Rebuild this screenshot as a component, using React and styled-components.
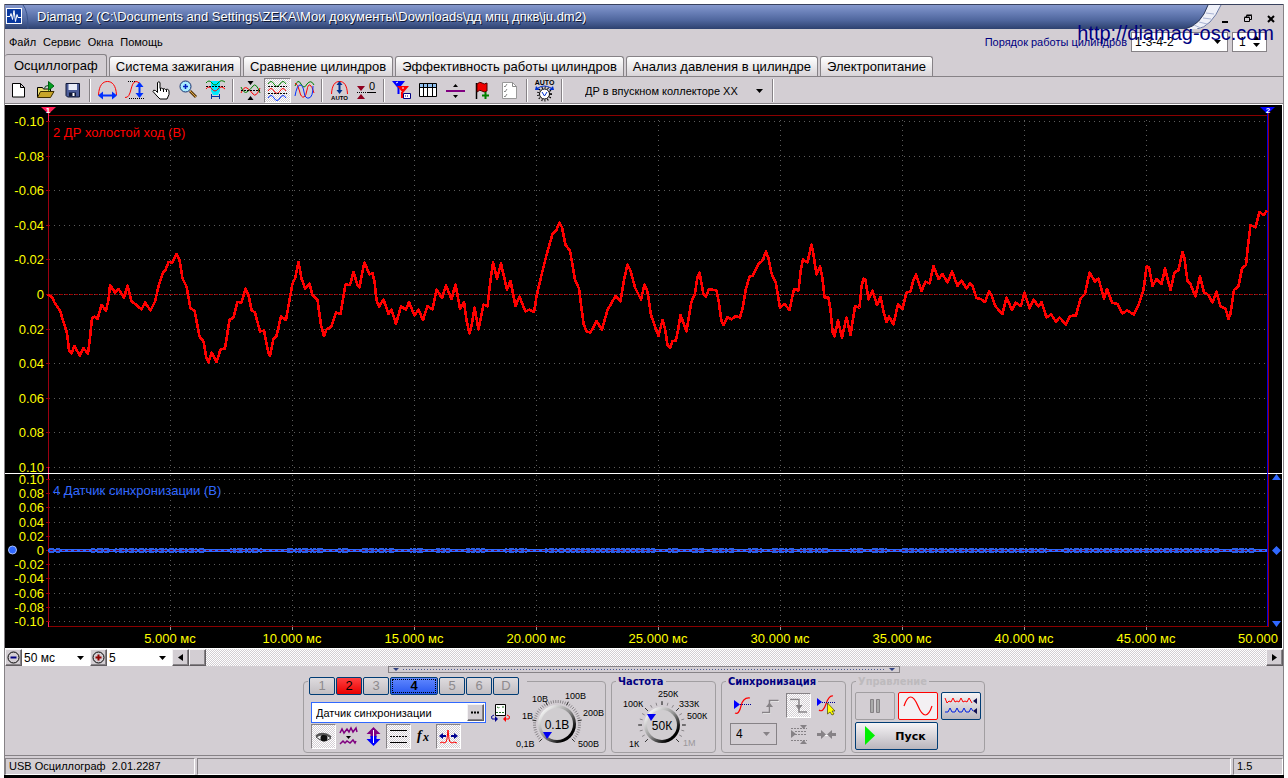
import React from 'react';
import styled, { createGlobalStyle, css } from 'styled-components';

const face = '#d3ced3';
const shadow = '#868286';
const navy = '#000080';
const trace4 = '#3068ff';

const GlobalStyle = createGlobalStyle`
    *, *::before, *::after {
        box-sizing: border-box;
    }
    body {
        margin: 0;
        background: #fff;
        color: #000;
        font-family: "Liberation Sans", Arial, sans-serif;
        font-size: 11px;
    }
    button, input, select {
        font: inherit;
        color: inherit;
        margin: 0;
        padding: 0;
    }
    svg {
        display: block;
        flex: none;
    }
`;

const checkered = css`
    background: repeating-conic-gradient(#fff 0 25%, ${face} 0 50%) 0 0 / 2px 2px;
`;

const Page = styled.div`
    min-height: 100vh;
    padding: 4px 4px 0;
    display: flex;
    flex-direction: column;
`;
const Window = styled.main`
    position: relative;
    display: flex;
    flex-direction: column;
    background: ${face};
    border-left: 1px solid ${shadow};
    border-right: 1px solid ${shadow};
`;
const Desktop = styled.div`
    flex: 1;
    min-height: 4px;
    background: #000;
`;

/* Title bar */

const TitleBar = styled.header`
    display: flex;
    height: 25px;
    border-top: 1px solid #39425e;
`;
const Caption = styled.div`
    flex: 1;
    min-width: 0;
    display: flex;
    align-items: center;
    background: linear-gradient(#8699cd, #6a80b8 30%, #4e659c 65%, #2d416f);
`;
const CaptionText = styled.h1`
    margin: 0 0 0 8px;
    font-size: 13px;
    font-weight: normal;
    line-height: 24px;
    white-space: nowrap;
    overflow: hidden;
    color: #fff;
    text-shadow: 1px 1px 0 #101830;
`;
const CaptionEdge = styled.svg`
    margin-right: -8px;
`;
const WindowButtons = styled.div`
    display: flex;
    align-items: center;
    padding-top: 2px;
`;
const WindowButton = styled.button`
    width: 23px;
    height: 20px;
    display: grid;
    place-items: center;
    border: 0;
    background: none;
`;
const SiteLink = styled.a`
    position: absolute;
    right: 9px;
    top: 17px;
    font-size: 20px;
    line-height: 24px;
    color: ${navy};
    text-decoration: none;
`;

/* Menu and tabs */

const MenuBar = styled.div`
    display: flex;
    align-items: center;
    height: 25px;
    padding-left: 4px;
`;
const MenuItem = styled.button`
    border: 0;
    background: none;
    margin-right: 7px;
`;
const FiringOrder = styled.div`
    margin-left: auto;
    padding-right: 16px;
    display: flex;
    align-items: center;
    gap: 4px;
`;
const FiringLabel = styled.label`
    color: ${navy};
`;
const SelectCell = styled.span`
    display: inline-grid;
    align-items: center;
    width: ${({ $width }) => $width};
    height: ${({ $height }) => $height || '20px'};
    border: ${({ $border }) => $border || '1px solid #868286'};
    background: ${({ $back }) => $back || '#fff'};
    color: ${({ $color }) => $color || '#000'};

    > * {
        grid-area: 1 / 1;
    }
    > svg {
        justify-self: end;
        margin-right: 6px;
        pointer-events: none;
    }
`;
const Select = styled.select`
    appearance: none;
    width: 100%;
    height: 100%;
    border: 0;
    border-radius: 0;
    background: none;
    padding-left: ${({ $pad }) => $pad || '3px'};
    font-size: ${({ $size }) => $size || '12px'};
`;
const TabList = styled.nav`
    display: flex;
    align-items: flex-end;
    gap: 2px;
    height: 22px;
    padding-right: 8px;
`;
const Tab = styled.button`
    height: ${({ $active }) => ($active ? '22px' : '20px')};
    padding: 0 6px;
    font-size: 13px;
    white-space: nowrap;
    border: 1px solid ${shadow};
    border-bottom: 0;
    border-radius: 3px 3px 0 0;
    background: ${({ $active }) => ($active ? face : 'linear-gradient(#fff, #d8d4d8)')};

    ${({ $active }) => $active && css`
        padding: 0 8px 0 9px;
        border-left: 0;
    `}
`;

/* Toolbar */

const Toolbar = styled.div`
    display: flex;
    align-items: center;
    height: 29px;
    border-top: 1px solid ${shadow};
    border-bottom: 1px solid #fff;
    box-shadow: inset 0 -1px 0 ${shadow};
`;
const ToolButton = styled.button`
    width: ${({ $width }) => $width || '27px'};
    height: 25px;
    display: grid;
    place-items: center;
    border: 1px solid transparent;
    background: none;

    ${({ $pressed }) => $pressed && css`
        ${checkered}
        border-color: ${shadow} #fff #fff ${shadow};
    `}
`;
const Separator = styled.span`
    width: 2px;
    height: 23px;
    margin: 0 3px;
    border-left: 1px solid ${shadow};
    border-right: 1px solid #fff;
`;

/* Chart */

const ChartView = styled.svg`
    width: 100%;
    height: auto;
    background: #000;
    border-right: 1px solid #fff;
    font-family: "Liberation Sans", Arial, sans-serif;
    font-size: 13px;
`;

/* Scroll row */

const ScrollRow = styled.div`
    display: flex;
    height: 18px;
    border-top: 1px solid #fff;
`;
const RaisedButton = styled.button`
    width: 17px;
    height: 17px;
    flex: none;
    display: grid;
    place-items: center;
    background: ${face};
    border: 1px solid;
    border-color: #f4f2f4 #605c60 #605c60 #f4f2f4;
    box-shadow: inset -1px -1px 0 ${shadow};
`;
const Track = styled.div`
    flex: 1;
    ${checkered}
`;
const Splitter = styled.button`
    align-self: center;
    width: 40%;
    height: 7px;
    display: flex;
    align-items: center;
    gap: 4px;
    padding: 0 4px;
    border: 1px solid ${shadow};
    background: ${face};
`;
const SplitterDots = styled.span`
    flex: 1;
    height: 1px;
    background: repeating-linear-gradient(90deg, #4a5890 0 1px, transparent 1px 3px);
`;

/* Control panel */

const Controls = styled.section`
    display: flex;
    justify-content: center;
    gap: 5px;
    padding: 2px 0;
    border-bottom: 1px solid ${shadow};
`;
const Group = styled.fieldset`
    width: ${({ $width }) => $width};
    height: 78px;
    min-width: 0;
    margin: 0;
    padding: 0;
    border: 1px solid #a19ea1;
    border-radius: 4px;
`;
const Legend = styled.legend`
    height: 12px;
    margin-left: 4px;
    padding: 0 2px;
    font-family: "DejaVu Sans Condensed", "DejaVu Sans", Verdana, sans-serif;
    font-size: 11px;
    font-weight: bold;
    line-height: 14px;
    white-space: nowrap;
    color: ${({ $disabled }) => ($disabled ? '#bdbabd' : navy)};
`;
const ChannelLegend = styled.legend`
    height: 12px;
    margin-left: 4px;
    padding: 2px 8px 0 1px;
`;
const Channels = styled.div`
    display: flex;
    gap: 1px;
`;
const Channel = styled.button`
    width: ${({ $wide }) => ($wide ? '48px' : '26px')};
    height: 18px;
    font-size: 13px;
    line-height: 14px;
    border: 1px solid #003c74;
    border-radius: 2px;
    color: ${({ $fill }) => ($fill ? '#000' : '#8d8a8d')};
    background: ${({ $fill }) => $fill || 'linear-gradient(#dedbde, #c2bec2)'};
    ${({ $wide }) => $wide && css`
        font-weight: bold;
        outline: 1px dotted #000;
        outline-offset: -3px;
    `}
`;
const ChannelBody = styled.div`
    display: flex;
`;
const ChannelSetup = styled.div`
    width: 207px;
    padding: 15px 0 0 7px;
`;
const SensorRow = styled.div`
    display: flex;
    align-items: center;
    gap: 4px;
`;
const SensorField = styled.div`
    display: flex;
    width: 177px;
    height: 21px;
    padding: 1px;
    border: 1px solid ${trace4};
    background: #fff;
`;
const SensorInput = styled.input`
    flex: 1;
    min-width: 0;
    padding-left: 3px;
    border: 0;
    font-size: 11px;
    background: none;
`;
const SmallTools = styled.div`
    display: flex;
    margin-top: 1px;
`;
const Dial = styled.label`
    display: grid;

    > * {
        grid-area: 1 / 1;
    }
    > input {
        opacity: 0;
        width: 36px;
        place-self: center;
    }
`;
const DialDrawing = styled.svg`
    font-family: "Liberation Sans", Arial, sans-serif;
    font-size: 9px;
`;
const SyncGrid = styled.div`
    display: grid;
    grid-template-columns: repeat(4, 28px);
    grid-template-rows: 24px 22px;
    row-gap: 6px;
    justify-items: center;
    align-items: center;
    padding: 6px 0 0 6px;
`;
const SyncLevel = styled.div`
    grid-column: span 2;
    justify-self: start;
    margin-left: 2px;
    display: flex;
`;
const RunGrid = styled.div`
    display: grid;
    grid-template-columns: repeat(3, 40px);
    grid-auto-rows: 28px;
    gap: 2px 3px;
    padding: 5px 0 0 3px;
`;
const RunButton = styled.button`
    display: grid;
    place-items: center;
    border: 1px solid ${({ $edge }) => $edge || '#003c74'};
    border-radius: 2px;
    background: ${({ $back }) => $back || 'linear-gradient(#f6f4f6, #b9b5bc)'};
`;
const StartButton = styled(RunButton)`
    grid-column: span 2;
    grid-template-columns: 28px 1fr;
    font-family: "DejaVu Sans", Verdana, sans-serif;
    font-size: 11px;
    font-weight: bold;
`;

/* Status bar */

const StatusBar = styled.footer`
    display: flex;
    gap: 2px;
    padding-top: 2px;
`;
const StatusCell = styled.span`
    width: ${({ $width }) => $width || 'auto'};
    flex: ${({ $width }) => ($width ? 'none' : 1)};
    height: 17px;
    padding-left: 3px;
    line-height: 15px;
    font-size: 11px;
    white-space: pre;
    border: 1px solid;
    border-color: ${shadow} #fff #fff ${shadow};
`;

const Arrow = ({ color = '#000' }) => (
    <svg width="7" height="4" viewBox="0 0 7 4"><path d="M0 0h7L3.500 4z" fill={color} /></svg>
);

const Icon = ({ children, w = 21, h = 21 }) => (
    <svg width={w} height={h} viewBox={`0 0 ${w} ${h}`} fill="none" stroke="#000" aria-hidden="true">{children}</svg>
);

const icons = {
    new: <Icon><path d="M4.500 3.500h8l4 4v9.500h-12zM12.500 3.500v4h4" fill="#fff" /></Icon>,
    open: (
        <Icon>
            <path d="M2.500 17V7.500h5l1 1.500h7v3" fill="#e8dc70" />
            <path d="M2.500 17.500l3-6h13.500l-3.500 6z" fill="#c8a428" stroke="#3a2c00" />
            <path d="M9.500 8.500q0-3 4-3" stroke="#004d10" />
            <path d="M13.500 1.500v9l5.500-4.500z" fill="#00a020" stroke="#006010" />
        </Icon>
    ),
    save: (
        <Icon>
            <path d="M4 3.500h13.500v13.500H5.500L4 15.500z" fill="#4c5c98" stroke="#101838" />
            <path d="M6.500 4h8.500v6H6.500z" fill="#e8ecf8" stroke="none" />
            <path d="M7 12.500h7v4H7z" fill="#101838" stroke="none" />
            <path d="M11.500 13v3" stroke="#fff" strokeWidth="2" />
        </Icon>
    ),
    period: (
        <Icon>
            <path d="M1.500 15C2 5 6 1.500 10.500 1.500S19 5 19.500 15" stroke="#f00" />
            <path d="M4 15.500h13" stroke="#0030ff" strokeWidth="2" />
            <path d="M1 15.500l5-4v8zM20 15.500l-5-4v8z" fill="#0030ff" stroke="none" />
        </Icon>
    ),
    amplitude: (
        <Icon>
            <path d="M1 17.500c7 1 5-16 11-16 3 0 4 3 6 5" stroke="#f00" />
            <path d="M4 1.500h8M5 18.500h15" strokeDasharray="1 1" />
            <path d="M15.500 5v10" stroke="#0030ff" strokeWidth="2" />
            <path d="M15.500 2l4 5h-8zM15.500 18l4-5h-8z" fill="#0030ff" stroke="none" />
        </Icon>
    ),
    hand: (
        <Icon>
            <path d="M6.500 12.500V2.500q1.500-1.500 2.500 0v6q1.500-1 3 .500 1.500-1 2.500.500 2-1 3.500 1v4l-2 4.500h-7l-3-3-4-4.500q0-2 2.500-1z" fill="#fff" />
            <path d="M9.500 8v3M12.500 9v3M15.500 10v2" />
        </Icon>
    ),
    zoom: (
        <Icon>
            <path d="M12 11l6 6" stroke="#5a3a10" strokeWidth="3" />
            <path d="M12 11l6 6" stroke="#e0a840" />
            <circle cx="7.500" cy="6.500" r="5.500" fill="#a8ecff" stroke="#183070" />
            <path d="M5 6.500h5M7.500 4v5" stroke="#0020c0" strokeWidth="1.500" />
        </Icon>
    ),
    window: (
        <Icon>
            <path d="M6 1h9v10l-2 4H8l-2-4z" fill="#00eaff" stroke="none" />
            <path d="M1 3q3-4 6 0t6 0 7-1" stroke="#008000" />
            <path d="M1 6.500h19" strokeDasharray="2 1" />
            <path d="M1 9q3-4 6 0t6 0 7 0" stroke="#f00" />
            <path d="M6.500 14v5M14.500 14v5M7 16.500h8" stroke="#0030a0" />
        </Icon>
    ),
    overlay: (
        <Icon>
            <path d="M1 13q3-7 6-5t6 6 7-6" stroke="#f00" />
            <path d="M1 7q3 7 6 5t6-6 7 7" stroke="#008000" />
            <path d="M1 10.500h19" strokeDasharray="2 1" />
            <path d="M7.500 1h6l-3 4zM7.500 20h6l-3-4z" fill="#000" stroke="none" />
        </Icon>
    ),
    stacked: (
        <Icon>
            <path d="M1 4q3-5 6 0t6 0 6 0" stroke="#008000" />
            <path d="M1 11q3-5 6 0t6 0 6 0" stroke="#f00" />
            <path d="M1 18q3-5 6 0t6 0 6 0" stroke="#0030ff" />
            <path d="M1 6.500h19M1 13.500h19" strokeDasharray="2 1" />
        </Icon>
    ),
    crossed: (
        <Icon>
            <path d="M1 6q3-8 6-2t6 0q4-5 7 1" stroke="#008000" />
            <path d="M1 3q3 1 4.500 8t4.500 6q2-1 3-7t3-5 4 8" stroke="#f00" />
            <path d="M1 16q2-11 5-11t4 7 5 6 4-12" stroke="#0030ff" />
        </Icon>
    ),
    autoPeriod: (
        <Icon>
            <path d="M2.500 14C3 5 6 1.500 10.500 1.500S18 5 18.500 14" stroke="#f00" />
            <path d="M10.500 3v9" stroke="#003090" strokeWidth="2" />
            <path d="M10.500 1l3 4h-6zM10.500 14l3-4h-6z" fill="#003090" stroke="none" />
            <text x="10.500" y="20" fontSize="6" fontWeight="bold" textAnchor="middle" fill="#000" stroke="none">AUTO</text>
        </Icon>
    ),
    zero: (
        <Icon>
            <path d="M1 6h8l-4 5zM1 19h8l-4-5z" fill="#900020" stroke="none" />
            <path d="M1 12.500h12" strokeDasharray="1 1" />
            <path d="M11 12.500h9" />
            <text x="16" y="10" fontSize="11" textAnchor="middle" fill="#000" stroke="none">0</text>
        </Icon>
    ),
    channelFilter: (
        <Icon>
            <path d="M1 1h13L7.500 9z" fill="#00f" stroke="none" />
            <path d="M7.500 8v6" stroke="#00f" strokeWidth="2" />
            <path d="M6 6h12l-6 7z" fill="#f00" stroke="none" />
            <path d="M11 12v6" stroke="#f00" strokeWidth="2" />
            <path d="M5 3l2-1M11 8h2" stroke="#fff" />
            <path d="M12.500 13.500h7v5h-7z" fill="#fff" stroke="#000080" />
            <path d="M14 16h4" stroke="#000080" strokeDasharray="1 1" />
        </Icon>
    ),
    table: (
        <Icon>
            <path d="M1.500 3.500h17v13h-17z" fill="#fff" />
            <path d="M2 4h16v3H2z" fill="#90c0f0" stroke="none" />
            <path d="M1.500 7.500h17M5.500 4v12M9.500 4v12M14.500 4v12" />
        </Icon>
    ),
    divider: (
        <Icon>
            <path d="M1 11h19" stroke="#800080" strokeWidth="2" />
            <path d="M8 7h5l-2.500-3zM8 15h5l-2.500 3z" fill="#000" stroke="none" />
        </Icon>
    ),
    flag: (
        <Icon>
            <path d="M4.500 3v16" strokeWidth="1.500" />
            <path d="M5 4q3-3 5-1t5 0v8q-3 2-5 0t-5 1z" fill="#f00000" stroke="#500000" />
            <path d="M10 15.500h7M13.500 12v7" stroke="#008000" strokeWidth="2" />
        </Icon>
    ),
    checklist: (
        <Icon>
            <path d="M3.500 2.500h10l4 4v12h-14z" fill="#fff" stroke="#999" />
            <path d="M13.500 2.500v4h4M5 6l1 1 2-3M5 11l1 1 2-3M5 16l1 1 2-3" stroke="#888" />
        </Icon>
    ),
    autoKnob: (
        <Icon h={23}>
            <text x="10.500" y="6" fontSize="7" fontWeight="bold" textAnchor="middle" fill="#000" stroke="none">AUTO</text>
            <path d="M4 9q6-4 13 0" stroke="#0030d0" />
            <path d="M1 11l5 0-4-4zM20 11l-5 0 4-4z" fill="#0030d0" stroke="none" />
            <circle cx="10.500" cy="15" r="6.500" strokeDasharray="1 2" strokeWidth="2" />
            <circle cx="10.500" cy="15" r="5" fill="#fff" />
            <path d="M8 13l2.500 4 2.500-4" stroke="#0030d0" />
        </Icon>
    ),
    sensor: (
        <Icon>
            <path d="M5.500 2.500h10v11h-10z" fill="#fff" />
            <path d="M7 5l2 1 1-1M12 5h2M6 10.500h9" stroke="#207020" strokeDasharray="2 1" />
            <path d="M4 13q-4 1-2 4h4" stroke="#000090" />
            <path d="M5 14v6l3-3z" fill="#000090" stroke="none" />
            <path d="M17 13q4 1 2 4h-4" stroke="#f00" />
            <path d="M16 14v6l-3-3z" fill="#f00" stroke="none" />
        </Icon>
    ),
    eye: (
        <Icon>
            <path d="M3 11q8-5 15 1-7 6-15-1z" fill="#eee" stroke="#444" />
            <circle cx="11" cy="12" r="3.500" fill="#111" stroke="none" />
            <path d="M3 10q7-5 15 1" strokeWidth="2" stroke="#555" />
        </Icon>
    ),
    noise: (
        <Icon>
            <path d="M2 7l2-4 2 4 3-4 2 3 2-4 2 4 3-4 1 4M2 18l3-3 2 2 2-2 3 2 3-3 2 3 1-2" stroke="#800080" strokeWidth="1.500" />
            <path d="M8 10h5l-2.500 3z" fill="#000" stroke="none" />
        </Icon>
    ),
    updown: (
        <Icon>
            <path d="M10.500 1l7 7h-4v3h-6V8h-4z" fill="#800080" stroke="none" />
            <path d="M10.500 20l7-7h-4v-3h-6v3h-4z" fill="#0000ff" stroke="none" />
            <path d="M10.500 4v13" stroke="#fff" />
        </Icon>
    ),
    levels: <Icon><path d="M2 4.500h17M2 16.500h17" /><path d="M2 10.500h17" strokeDasharray="2 1" /></Icon>,
    fx: (
        <Icon>
            <text x="4" y="14" fontSize="14" fontStyle="italic" fontWeight="bold" fontFamily="Liberation Serif, serif" fill="#000" stroke="none">f</text>
            <text x="10" y="15" fontSize="12" fontStyle="italic" fontWeight="bold" fontFamily="Liberation Serif, serif" fill="#000" stroke="none">x</text>
        </Icon>
    ),
    spike: (
        <Icon>
            <path d="M2 17l2-1 2 1 2-1 1-3 1-9 1 9 1 3 2 1 2-1 3 1" stroke="#f00" />
            <path d="M1 10l4-3v2h3v2H5v2zM20 10l-4-3v2h-3v2h3v2z" fill="#000090" stroke="none" />
        </Icon>
    ),
    syncLevel: (
        <Icon>
            <path d="M3 18q4 2 6-7t9-8" stroke="#f00" strokeWidth="1.200" />
            <path d="M2 5l6 4.500-6 4.500z" fill="#00f" stroke="none" />
            <path d="M8 9.500h11" stroke="#000090" strokeDasharray="1 1" />
        </Icon>
    ),
    rise: (
        <Icon>
            <path d="M3 18.500h7v-12h9" stroke="#fff" />
            <path d="M2 17.500h7.500V5.500h9" stroke="#868286" strokeWidth="1.500" />
            <path d="M6 12l3.500-4.500 3.500 4.500z" fill="#868286" stroke="none" />
        </Icon>
    ),
    fall: (
        <Icon>
            <path d="M3 5.500h9v12h7" stroke="#fff" />
            <path d="M2 4.500h9v12.500h8" stroke="#868286" strokeWidth="1.500" />
            <path d="M7.500 10l3.500 5 3.500-5z" fill="#868286" stroke="none" />
        </Icon>
    ),
    syncPick: (
        <Icon>
            <path d="M3 15q4 3 7-6t7-8" stroke="#f00" strokeWidth="1.200" />
            <path d="M1 3l5 4-5 4z" fill="#00f" stroke="none" />
            <path d="M6 7.500h14" stroke="#000090" strokeDasharray="1 1" />
            <path d="M11.500 8v11l2.500-2 2 3 2-1-2-3h3z" fill="#ff0" stroke="#444000" strokeWidth="0.700" />
        </Icon>
    ),
    syncWindow: (
        <Icon>
            <path d="M3 6l5 4-5 4z" fill="#868286" stroke="none" />
            <path d="M3 4.500h16M7 7.500h12M7 10.500h12M3 16.500h16" stroke="#868286" strokeDasharray="2 1" />
            <path d="M12 1h7l-3.500 4zM12 20h7l-3.500-4z" fill="#868286" stroke="none" />
        </Icon>
    ),
    converge: (
        <Icon>
            <path d="M2 11.500h17" stroke="#fff" />
            <path d="M1 9h4V6l5 4.500L5 15v-3H1zM20 9h-4V6l-5 4.500 5 4.500v-3h4z" fill="#868286" stroke="none" />
        </Icon>
    ),
};

const toolGroups = [
    [['new', 'Новый'], ['open', 'Открыть'], ['save', 'Сохранить']],
    [['period', 'Период'], ['amplitude', 'Амплитуда'], ['hand', 'Перемещение'], ['zoom', 'Масштаб'], ['window', 'Участок']],
    [['overlay', 'Наложить'], ['stacked', 'Разделить', true], ['crossed', 'Совместить']],
    [['autoPeriod', 'Авто'], ['zero', 'Ноль']],
    [['channelFilter', 'Каналы'], ['table', 'Таблица'], ['divider', 'Разделитель'], ['flag', 'Метка'], ['checklist', 'Список']],
    [['autoKnob', 'Автонастройка']],
];

const tabs = ['Осциллограф', 'Система зажигания', 'Сравнение цилиндров', 'Эффективность работы цилиндров', 'Анализ давления в цилиндре', 'Электропитание'];

const pressureTrace = `48,294.5 52,297 55,303.5 60,310.5 63,320.5 67,333 69,350 71.5,353.5 74.5,346 77.5,351.5 80,355.5
    83.5,348 88,354 90,338 92,318.5 94.5,316.5 97.5,319 101.5,305 106,310.5 108.5,300 110,285 115,292.5 118.5,289
    124,297.5 127.5,285.5 131.5,301.5 136.5,305 141.5,309.5 145,302.5 150.5,310.5 155,301.5 158.5,286.5 162.5,273.5
    165.5,270 168.5,262 172.5,262.5 176.5,254 179.5,260 182.5,278.5 186.5,286.5 190.5,308.5 194.5,310.5 199.5,336.5
    203.5,341.5 206.5,358.5 208.5,362.5 211.5,352.5 214,356.5 216.5,362 220.5,349.5 225,348.5 229.5,320 233.5,317.5
    237.5,302 241.5,302.5 245.5,288.5 248.5,295 251.5,310 255,312.5 260,331.5 264,330.5 268.5,353.5 270,355.5
    273.5,338.5 276.5,336 281,316.5 286,320 289.5,300 292.5,283.5 295,278.5 298.5,262 301.5,278.5 305,288.5
    309.5,283.5 312.5,295 317.5,300 321,325 324,336 326.5,329.5 331.5,326.5 336,312.5 340.5,314 343.5,296.5
    345.5,284.5 350,285 353.5,272 357.5,285 359.5,287.5 362.5,271.5 364.5,262.5 369.5,274.5 372.5,273 374.5,281.5
    376.5,300 379,306.5 383.5,299.5 388.5,314 391.5,309.5 396,324 401,306.5 406,309.5 409,302 414.5,315.5
    418.5,309.5 423,320 427.5,306 432.5,309.5 436.5,289.5 442,298 446,285.5 451.5,299 455.5,284.5 460,308.5 464,302
    466.5,320 469.5,333.5 472,323.5 474.5,307.5 478.5,329.5 483.5,304.5 487.5,306.5 490.5,280 493,262.5 497,278.5
    501,263.5 507,289.5 510.5,281 515.5,306 519.5,296.5 525.5,311.5 529.5,309.5 534,312 536.5,296.5 541.5,275
    546.5,255 552.5,234 556.5,230 559.5,222.5 562,227.5 565.5,245 570,250.5 575,280 579,288.5 583.5,323.5
    586.5,331.5 590.5,332.5 596.5,321 602,329.5 607.5,310 615.5,296 620.5,301.5 624,280 627.5,264.5 630.5,270.5
    635,287.5 641,299.5 644.5,284.5 647.5,291.5 651,315 658.5,336 662.5,320 665,328.5 667.5,345 670,348 672.5,341
    676,340.5 678,330 680.5,315 686.5,331.5 691.5,301.5 695,293.5 697.5,276.5 699.5,272.5 703.5,294.5 706,296.5
    709,289 716.5,290.5 718.5,300 721.5,321.5 723.5,325 727.5,317 731.5,319.5 735.5,316 740,317.5 742.5,308.5
    746,288.5 749.5,276.5 752.5,276 758.5,264 762.5,260.5 766,251.5 768.5,258.5 771.5,273.5 776,283.5 780,307.5
    784.5,304 789.5,310 794,289 798.5,290.5 801,268.5 803,259.5 807.5,262.5 811.5,244.5 813,251.5 816.5,274.5
    820,266.5 822.5,278.5 824.5,297.5 828.5,297.5 830.5,310 832.5,331.5 834.5,336.5 838,320.5 842,337.5 846.5,317.5
    850.5,335 855,306.5 859.5,307.5 861.5,286.5 863.5,278.5 865.5,280 868.5,299.5 872.5,290.5 877,305 880.5,297
    883.5,311.5 886.5,322 889,316.5 893.5,324.5 898,304 902.5,309 906.5,292.5 910.5,291.5 913.5,280 916,274.5
    921.5,291 925.5,281.5 929.5,283.5 933.5,266 938.5,279 942.5,274 947.5,282.5 952,271.5 957.5,286 961.5,280.5
    966.5,288.5 970,283.5 972.5,286 976.5,298 981,299 985,302 989,291.5 991.5,295 995.5,306.5 1002.5,314
    1006.5,297.5 1012,310 1015.5,302.5 1021,306 1024.5,292.5 1029.5,308.5 1033.5,299.5 1038.5,306.5 1041.5,302
    1046.5,317.5 1051,314.5 1056,321.5 1059.5,317.5 1066,324.5 1070,316 1076,315.5 1080.5,298.5 1085,294
    1089.5,272.5 1095,281.5 1098.5,278.5 1104,298.5 1107,289 1112,302.5 1117.5,304 1122.5,313.5 1127,310.5
    1134,314.5 1138.5,305 1143.5,290 1146.5,266.5 1149,267.5 1152.5,286 1156.5,279 1161.5,284 1165,268.5
    1170.5,290 1174.5,272.5 1178.5,270 1182.5,252 1184.5,258.5 1187.5,281.5 1190.5,284 1195.5,296.5 1200,276
    1204,292.5 1208.5,295 1212.5,302.5 1216.5,291.5 1220.5,306.5 1225.5,308.5 1228.5,319 1230.5,313.5 1234,290
    1238.5,286 1242,268.5 1246,265 1247.5,250 1250.5,225 1255.5,227.5 1259.5,212 1263.5,215 1267,210.5`;

// time ranges where the sync channel is noisy
const noisy = [[49, 62], [91, 107], [115, 200], [230, 262], [287, 318], [338, 350], [362, 392], [410, 424], [436, 450], [466, 486], [505, 528], [545, 560], [566, 652], [668, 676], [692, 704], [712, 732], [748, 762], [772, 790], [800, 824], [850, 860], [872, 888], [902, 1046], [1064, 1218], [1232, 1253]];
const noisePath = noisy.map(([from, to]) => {
    let d = '';
    for (let x = from, i = 0; x < to; i += 1) {
        const run = 2 + ((x * 7 + i * 5) % 5);
        d += `M${x} 550.500h${run}`;
        x += run + 1 + ((x * 3 + i) % 2);
    }
    return d;
}).join('');

const levels = [-0.1, -0.08, -0.06, -0.04, -0.02, 0, 0.02, 0.04, 0.06, 0.08, 0.1];
const upperLines = [121, 156, 190, 225, 259, 294, 329, 363, 398, 432, 467];
const lowerLines = [621, 607, 593, 578, 564, 550, 536, 522, 507, 493, 479];
const timeMarks = [5, 10, 15, 20, 25, 30, 35, 40, 45];
const levelText = (value) => (value === 0 ? '0' : value.toFixed(2));
const timeX = (ms) => 48 + ms * 24.4;

const Chart = () => (
    <ChartView viewBox="5 105 1277 543" role="img" aria-label="Осциллограмма">
        <g shapeRendering="crispEdges">
            <g stroke="#5c5c5c" strokeDasharray="1 4">
                {[...upperLines, ...lowerLines].map((y) => <path key={y} d={`M54 ${y + 0.5}H1266`} />)}
                {timeMarks.map((ms) => <path key={ms} d={`M${timeX(ms) + 0.5} 120V626`} />)}
            </g>
            <path d="M49 115.500H1268M49 626.500H1268" stroke="#8a0000" />
            <path d="M48.500 113V627M1268.500 113V627" stroke="#9c0010" />
            <path d={[...upperLines, ...lowerLines].map((y) => `M46 ${y + 0.5}h4`).join('')} stroke="#9c0010" />
            <path d="M50 294.500H1267" stroke="#980000" strokeDasharray="3 2" />
            <path d="M48.500 113v8M48.500 467v12M48.500 622v5" stroke="#ff2058" />
            <path d={timeMarks.map((ms) => `M${timeX(ms) + 0.5} 627v3`).join('')} stroke="#999" />
            <path d="M5 473.500H1283" stroke="#fff" />
            <path d="M48 550.500H1267" stroke={trace4} strokeWidth="3" />
            <path d={noisePath} stroke="#2c5ee6" strokeWidth="5" />
            <path d="M50 550.500H1267" stroke="#700030" strokeDasharray="3 3" />
            <path d="M1267.500 113V626" stroke="#0000e0" />
            <polyline points={pressureTrace} fill="none" stroke="#f00" strokeWidth="2.600" strokeLinejoin="round" />
        </g>
        <path d="M41 107h15l-7.500 7z" fill="#ff2058" />
        <path d="M1260 107h15l-7.500 7z" fill="#00f" />
        <g fill="#fff" fontSize="8" fontWeight="bold" textAnchor="middle">
            <text x="48" y="113">1</text>
            <text x="1268" y="113">2</text>
        </g>
        <g fill={trace4}>
            <circle cx="12.500" cy="550" r="4" stroke="#a8c0ff" />
            <path d="M1272 480h9l-4.500-6zM1272 621h9l-4.500 6zM1276.500 546l4.500 4.500-4.500 4.500-4.500-4.500z" />
        </g>
        <g fill="#ff0" textAnchor="end">
            {levels.map((value, i) => (
                <React.Fragment key={value}>
                    <text x="44" y={upperLines[i] + 5}>{levelText(value)}</text>
                    <text x="44" y={lowerLines[10 - i] + 5}>{levelText(-value)}</text>
                </React.Fragment>
            ))}
        </g>
        <g fill="#ff0" textAnchor="middle">
            {timeMarks.map((ms) => <text key={ms} x={timeX(ms)} y="643">{`${ms}.000 мс`}</text>)}
            <text x="1258" y="643">50.000</text>
        </g>
        <text x="53" y="137" fill="#f00">2 ДР холостой ход (В)</text>
        <text x="53" y="495" fill={trace4}>4 Датчик синхронизации (В)</text>
    </ChartView>
);

const ticks = (cx, cy, r1, r2, step) => {
    let d = '';
    for (let a = 135; a <= 405; a += step) {
        const rad = (a * Math.PI) / 180;
        d += `M${cx + r1 * Math.cos(rad)} ${cy + r1 * Math.sin(rad)}L${cx + r2 * Math.cos(rad)} ${cy + r2 * Math.sin(rad)}`;
    }
    return d;
};

const Knob = ({ id, label, width, cx, cy, r, value, fine, marks, pointer, texts }) => (
    <Dial>
        <DialDrawing width={width} height="64" viewBox={`0 0 ${width} 64`}>
            <linearGradient id={id} x1="0" y1="0" x2="1" y2="1">
                <stop offset="0.100" stopColor="#fff" />
                <stop offset="0.500" stopColor="#909090" />
                <stop offset="0.800" stopColor="#000" />
            </linearGradient>
            <path d={ticks(cx, cy, r + 2, r + 5, fine)} stroke="#8a868a" />
            <path d={ticks(cx, cy, r + 2, r + 6, marks)} stroke="#333" />
            <circle cx={cx} cy={cy} r={r} fill={`url(#${id})`} />
            <circle cx={cx} cy={cy} r={r - 3} fill="#d0cdd0" />
            <path d="M-4-3h9l-5 7z" fill="#0000f0" transform={pointer} />
            <text x={cx} y={cy + 5} fontSize="12" textAnchor="middle">{value}</text>
            {texts.map(([text, x, y, off]) => <text key={text} x={x} y={y} fill={off ? '#9a979a' : '#000'}>{text}</text>)}
        </DialDrawing>
        <input type="range" aria-label={label} />
    </Dial>
);

const App = () => (
    <Page>
        <GlobalStyle />
        <Window>
            <TitleBar>
                <Caption>
                    <svg width="24" height="24" viewBox="0 0 24 24">
                        <path d="M1 3h16v16H1z" fill="#fff" />
                        <path d="M2 4h14v14H2z" fill="#0838a0" />
                        <path d="M2 11.500h3l1-3 1.500 6 1.500-9 1.500 11 1.500-7 1 3h3" fill="none" stroke="#fff" />
                        <path d="M18 0q5 5 5 24" stroke="#39538c" fill="none" />
                    </svg>
                    <CaptionText>Diamag 2 (C:\Documents and Settings\ZEKA\Мои документы\Downloads\дд мпц дпкв\ju.dm2)</CaptionText>
                </Caption>
                <CaptionEdge width="45" height="24" viewBox="0 0 45 24">
                    <linearGradient id="caption" x1="0" y1="0" x2="0" y2="1">
                        <stop offset="0" stopColor="#8699cd" />
                        <stop offset="0.300" stopColor="#6a80b8" />
                        <stop offset="0.650" stopColor="#4e659c" />
                        <stop offset="1" stopColor="#2d416f" />
                    </linearGradient>
                    <path d="M0 0h32Q24 22 8 24H0z" fill="url(#caption)" />
                    <path d="M31 0h13Q34 22 20 24H8Q24 20 31 0z" fill="#eef0f8" />
                    <path d="M44 0Q34 22 20 24" stroke="#6c7ba6" fill="none" />
                    <path d="M31 0Q24 20 8 24" stroke="#2c3858" fill="none" />
                    <path d="M29 8l8 1M26 13l8 1M22 17l8 2M17 20l7 3" stroke="#a9b4d4" fill="none" />
                </CaptionEdge>
                <WindowButtons>
                    <WindowButton aria-label="Свернуть"><Icon w={9} h={11}><path d="M1 9h6" strokeWidth="2" /></Icon></WindowButton>
                    <WindowButton aria-label="Восстановить"><Icon w={9} h={9}><path d="M2.500 3V1.500h5v4H6M.500 3.500h5v4h-5zM2.500 1h5.500M.500 3h5" /></Icon></WindowButton>
                    <WindowButton aria-label="Закрыть"><Icon w={9} h={9}><path d="M1 2l6 6M7 2L1 8" strokeWidth="2" /></Icon></WindowButton>
                </WindowButtons>
            </TitleBar>
            <MenuBar>
                {['Файл', 'Сервис', 'Окна', 'Помощь'].map((item) => <MenuItem key={item}>{item}</MenuItem>)}
                <FiringOrder>
                    <FiringLabel htmlFor="order">Порядок работы цилиндров</FiringLabel>
                    <SelectCell $width="97px">
                        <Select id="order"><option>1-3-4-2</option></Select>
                        <Arrow />
                    </SelectCell>
                    <SelectCell $width="35px">
                        <Select aria-label="Цилиндр" $pad="6px"><option>1</option></Select>
                        <svg width="7" height="11" viewBox="0 0 7 11"><path d="M0 4h7L3.500 0zM0 7h7l-3.500 4z" /></svg>
                    </SelectCell>
                </FiringOrder>
            </MenuBar>
            <TabList>
                {tabs.map((tab, i) => <Tab key={tab} $active={i === 0}>{tab}</Tab>)}
            </TabList>
            <Toolbar>
                {toolGroups.map((group, i) => (
                    <React.Fragment key={i}>
                        {group.map(([name, title, pressed]) => (
                            <ToolButton key={name} aria-label={title} $pressed={pressed}>{icons[name]}</ToolButton>
                        ))}
                        <Separator />
                    </React.Fragment>
                ))}
                <SelectCell $width="203px" $border="0" $back="none">
                    <Select aria-label="Режим" $pad="19px" $size="11px"><option>ДР в впускном коллекторе ХХ</option></Select>
                    <Arrow />
                </SelectCell>
                <Separator />
            </Toolbar>
            <Chart />
            <ScrollRow>
                <RaisedButton aria-label="Уменьшить">
                    <Icon w={13} h={13}><circle cx="6.500" cy="6.500" r="5.500" /><path d="M3.500 6.500h6" stroke="#000080" strokeWidth="2" /></Icon>
                </RaisedButton>
                <SelectCell $width="68px" $height="17px" $border="0">
                    <Select aria-label="Развёртка" $pad="2px"><option>50 мс</option></Select>
                    <Arrow />
                </SelectCell>
                <RaisedButton aria-label="Увеличить">
                    <Icon w={13} h={13}><circle cx="6.500" cy="6.500" r="5.500" /><path d="M3.500 6.500h6M6.500 3.500v6" stroke="#900000" strokeWidth="2" /></Icon>
                </RaisedButton>
                <SelectCell $width="65px" $height="17px" $border="0">
                    <Select aria-label="Множитель" $pad="2px"><option>5</option></Select>
                    <Arrow />
                </SelectCell>
                <RaisedButton aria-label="Влево"><Icon w={5} h={7}><path d="M5 0v7L0 3.500z" fill="#000" stroke="none" /></Icon></RaisedButton>
                <RaisedButton aria-label="Ползунок" />
                <Track />
                <RaisedButton aria-label="Вправо"><Icon w={5} h={7}><path d="M0 0v7l5-3.500z" fill="#000" stroke="none" /></Icon></RaisedButton>
            </ScrollRow>
            <Splitter aria-label="Скрыть панель">
                <svg width="6" height="3" viewBox="0 0 6 3"><path d="M0 0h6L3 3z" fill="#304080" /></svg>
                <SplitterDots />
                <svg width="6" height="3" viewBox="0 0 6 3"><path d="M0 0h6L3 3z" fill="#304080" /></svg>
            </Splitter>
            <Controls>
                <Group $width="303px">
                    <ChannelLegend>
                        <Channels>
                            <Channel>1</Channel>
                            <Channel $fill="linear-gradient(#ff4040, #e80000)">2</Channel>
                            <Channel>3</Channel>
                            <Channel $wide $fill="linear-gradient(#6088ff, #2858f0)">4</Channel>
                            <Channel>5</Channel>
                            <Channel>6</Channel>
                            <Channel>D</Channel>
                        </Channels>
                    </ChannelLegend>
                    <ChannelBody>
                        <ChannelSetup>
                            <SensorRow>
                                <SensorField>
                                    <SensorInput aria-label="Датчик" defaultValue="Датчик синхронизации" />
                                    <RaisedButton aria-label="Выбрать датчик"><Icon w={9} h={3}><path d="M0 1.500h2M3 1.500h2M6 1.500h2" strokeWidth="2" /></Icon></RaisedButton>
                                </SensorField>
                                {icons.sensor}
                            </SensorRow>
                            <SmallTools>
                                <ToolButton $width="25px" $pressed aria-label="Показать">{icons.eye}</ToolButton>
                                <ToolButton $width="25px" aria-label="Шум">{icons.noise}</ToolButton>
                                <ToolButton $width="25px" aria-label="Инвертировать">{icons.updown}</ToolButton>
                                <ToolButton $width="25px" $pressed aria-label="Уровни">{icons.levels}</ToolButton>
                                <ToolButton $width="25px" aria-label="Функция">{icons.fx}</ToolButton>
                                <ToolButton $width="25px" $pressed aria-label="Импульс">{icons.spike}</ToolButton>
                            </SmallTools>
                        </ChannelSetup>
                        <Knob
                            id="range" label="Диапазон" width={94} cx={46} cy={37} r={19} value="0.1В"
                            fine={6} marks={54} pointer="translate(36 48)"
                            texts={[['0,1В', 5, 60], ['1В', 11, 32], ['10В', 21, 15], ['100В', 54, 12], ['200В', 72, 29], ['500В', 67, 60]]}
                        />
                    </ChannelBody>
                </Group>
                <Group $width="105px">
                    <Legend>Частота</Legend>
                    <Knob
                        id="rate" label="Частота" width={103} cx={50} cy={38} r={18} value="50К"
                        fine={15} marks={45} pointer="translate(39 30)"
                        texts={[['1К', 17, 60], ['100К', 11, 20], ['250К', 46, 10], ['333К', 67, 20], ['500К', 75, 32], ['1М', 71, 59, true]]}
                    />
                </Group>
                <Group $width="125px">
                    <Legend>Синхронизация</Legend>
                    <SyncGrid>
                        <ToolButton $width="25px" aria-label="Уровень">{icons.syncLevel}</ToolButton>
                        <ToolButton $width="25px" aria-label="Фронт">{icons.rise}</ToolButton>
                        <ToolButton $width="25px" $pressed aria-label="Спад">{icons.fall}</ToolButton>
                        <ToolButton $width="25px" aria-label="Указать">{icons.syncPick}</ToolButton>
                        <SyncLevel>
                            <SelectCell $width="47px" $height="22px" $back="none">
                                <Select aria-label="Канал синхронизации" $pad="5px"><option>4</option></Select>
                                <Arrow color="#868286" />
                            </SelectCell>
                        </SyncLevel>
                        <ToolButton $width="25px" aria-label="Окно">{icons.syncWindow}</ToolButton>
                        <ToolButton $width="25px" aria-label="Сжать">{icons.converge}</ToolButton>
                    </SyncGrid>
                </Group>
                <Group $width="134px">
                    <Legend $disabled>Управление</Legend>
                    <RunGrid>
                        <RunButton aria-label="Пауза" $edge="#a19ea1" $back={face}>
                            <Icon w={12} h={16}><path d="M1.500 1.500h3v13h-3zM7.500 1.500h3v13h-3z" fill="#aaa" stroke="#868286" /></Icon>
                        </RunButton>
                        <RunButton aria-label="Однократно" $edge="#f00" $back="#f3f0f3">
                            <Icon w={30} h={22}><path d="M1 11C5-1 10-1 15 11s10 12 14 0" stroke="#f00" strokeWidth="1.200" /></Icon>
                        </RunButton>
                        <RunButton aria-label="Непрерывно">
                            <Icon w={34} h={20}>
                                <path d="M1 2l2 5 2-2 2 1 2-4 2 4 2-1 2 1 2-4 2 4 2-1 2 1 2-4 3 5" stroke="#f00" />
                                <path d="M1 16h3l2-4 2 4h3l2-4 2 4h3l2-4 2 4h3l2-4 2 3" stroke="#0020e0" />
                                <path d="M33 2v6l-4-3zM33 12v6l-4-3z" fill="#101050" stroke="none" />
                            </Icon>
                        </RunButton>
                        <StartButton>
                            <Icon w={11} h={20}><path d="M0 0v19l10-9.500z" fill="#00f000" stroke="none" /></Icon>
                            <span>Пуск</span>
                        </StartButton>
                    </RunGrid>
                </Group>
            </Controls>
            <StatusBar>
                <StatusCell $width="190px">{'USB Осциллограф  2.01.2287'}</StatusCell>
                <StatusCell />
                <StatusCell $width="50px">1.5</StatusCell>
            </StatusBar>
            <SiteLink href="http://diamag-osc.com">http://diamag-osc.com</SiteLink>
        </Window>
        <Desktop />
    </Page>
);

export default App;
